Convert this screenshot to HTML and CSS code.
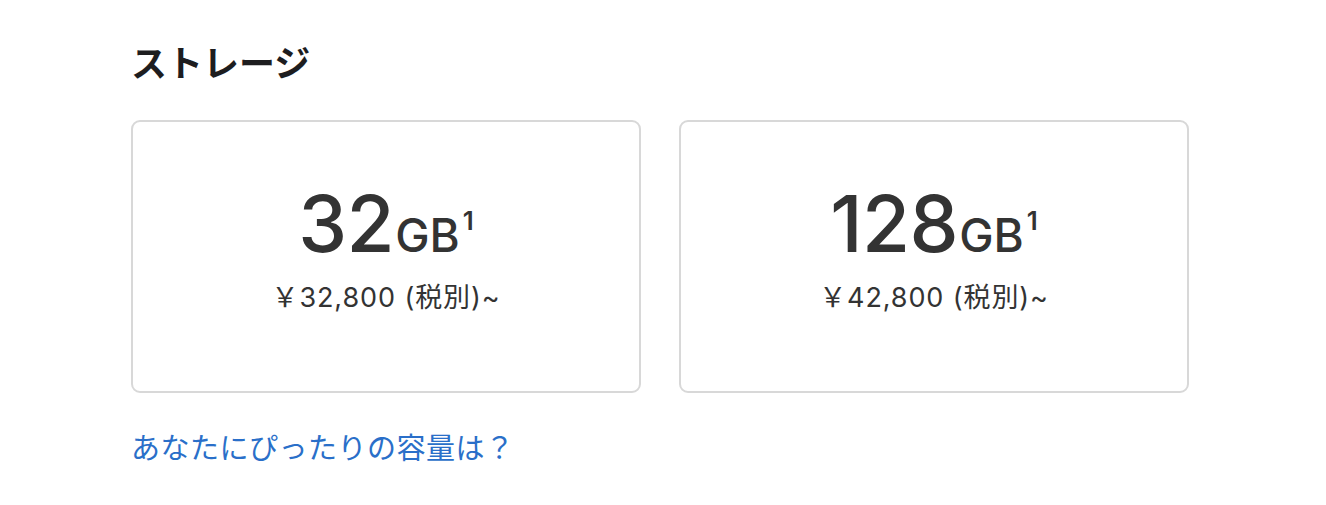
FILE: index.html
```html
<!DOCTYPE html>
<html lang="ja">
<head>
<meta charset="utf-8">
<link rel="stylesheet" href="styles.css">
</head>
<body>
<section class="storage">
  <h2 class="title">ストレージ</h2>
  <div class="cards">
    <div class="card">
      <div class="capacity"><span class="num">32</span><span class="unit">GB</span><sup class="fn">1</sup></div>
      <div class="price">￥32,800 (税別)~</div>
    </div>
    <div class="card">
      <div class="capacity"><span class="num">128</span><span class="unit">GB</span><sup class="fn">1</sup></div>
      <div class="price">￥42,800 (税別)~</div>
    </div>
  </div>
  <a class="help" href="#">あなたにぴったりの容量は？</a>
</section>
</body>
</html>
```
FILE: styles.css
```css
html, body {
  margin: 0;
  padding: 0;
  background: #fff;
}
body {
  font-family: "Inter", "Noto Sans CJK JP", sans-serif;
  color: #333;
}
.storage {
  padding: 35px 0 0 131px;
  width: 1058px;
}
.title {
  margin: 0;
  font-family: "Noto Sans CJK JP", sans-serif;
  font-size: 36px;
  font-weight: 600;
  line-height: 52px;
  color: #1d1d1f;
}
.cards {
  display: grid;
  grid-template-columns: 510px 510px;
  gap: 38px;
  margin-top: 33px;
}
.card {
  box-sizing: border-box;
  height: 273px;
  border: 2px solid #d8d8d8;
  border-radius: 9px;
  display: flex;
  flex-direction: column;
  align-items: center;
  padding-top: 62px;
}
.capacity {
  display: flex;
  align-items: baseline;
  line-height: 80px;
  color: #333;
}
.num {
  font-size: 78px;
  font-weight: 500;
  letter-spacing: -0.5px;
}
.unit {
  font-size: 46px;
  font-weight: 500;
  margin-left: 1px;
}
.fn {
  font-size: 26px;
  font-weight: 600;
  align-self: flex-start;
  line-height: 1;
  margin-top: 24px;
  margin-left: 3px;
}
.price {
  margin-top: 7px;
  font-size: 27px;
  letter-spacing: 0.9px;
  line-height: 32px;
  color: #333;
}
.help {
  display: inline-block;
  margin-top: 33px;
  font-family: "Noto Sans CJK JP", sans-serif;
  font-size: 29px;
  letter-spacing: 0.5px;
  line-height: 40px;
  color: #2a6fc9;
  text-decoration: none;
}
```
